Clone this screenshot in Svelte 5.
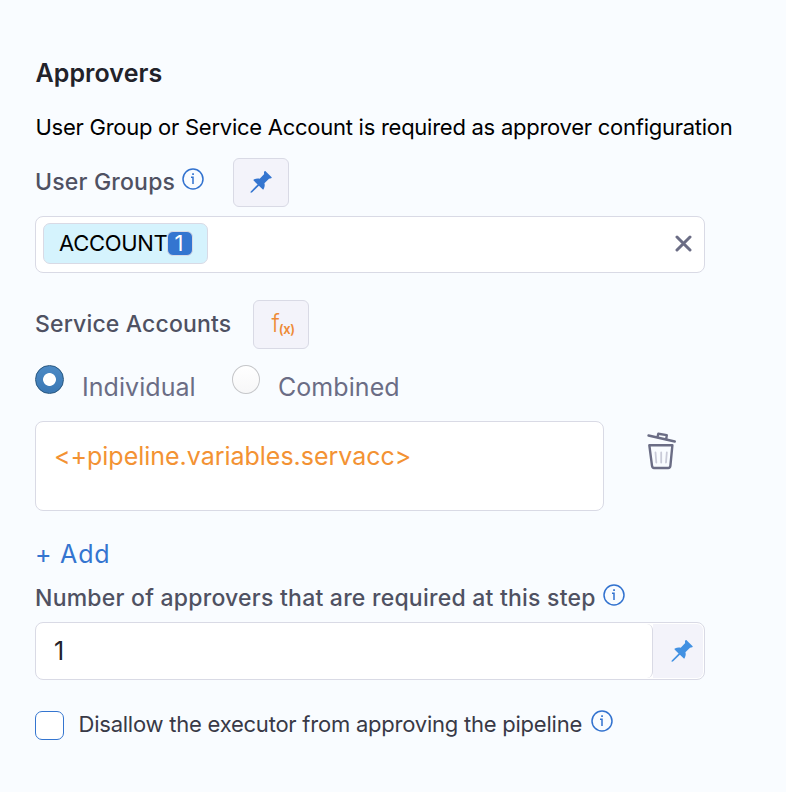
<script>
  let mode = $state('individual');
</script>

{#snippet info()}
  <svg class="info" width="22" height="22" viewBox="0 0 22 22" fill="none" stroke="#3272cf" aria-hidden="true">
    <circle cx="11" cy="11" r="10" stroke-width="1.5" />
    <path d="M9 9.2h2V15.9" stroke-width="1.5" />
    <path d="M10.2 6.2h1.7" stroke-width="1.8" />
  </svg>
{/snippet}

{#snippet pin(color)}
  <svg width="22" height="22" viewBox="0 0 22 22" fill={color} aria-hidden="true">
    <path d="M14.5 0.3C15.1-.1 15.4.1 15.8.5L21.4 6.1C21.9 6.6 21.8 7.1 21.1 7.2L19 7.8L14.4 12.3C15 14.2 14.8 16 13.6 18.2C13.4 18.7 13 18.7 12.6 18.3L8.9 14.7L2.2 21.2C1.5 21.9.2 21.9.6 20.8L1 20.2L7.6 13.4L3.8 9.7C3.3 9.2 3.3 8.8 3.9 8.5C5.7 7.5 7.9 7.1 9.7 7.7L14.2 3.1C13.9 2.2 13.8 1.1 14.5.3Z" />
  </svg>
{/snippet}

<main>
  <h2><span>Approvers</span></h2>
  <p class="intro"><span>User Group or Service Account is required as approver configuration</span></p>

  <div class="row groups">
    <span class="label l1">User Groups</span>
    {@render info()}
    <button class="square" aria-label="Fixed value">{@render pin('#3475d0')}</button>
  </div>

  <div class="field select">
    <span class="tag"><span class="name">ACCOUNT</span><span class="count">1</span></span>
    <svg width="18" height="18" viewBox="0 0 18 18" fill="none" stroke="#6b6d85" stroke-width="3" stroke-linecap="round" aria-label="Clear">
      <path d="M3 2L16 15M16 2L3 15" />
    </svg>
  </div>

  <div class="row service">
    <span class="label l2">Service Accounts</span>
    <button class="square fx" aria-label="Expression"><span class="f">f</span><span class="x">(x)</span></button>
  </div>

  <div class="radios">
    <button class="radio" class:on={mode === 'individual'} onclick={() => (mode = 'individual')} aria-label="Individual"></button>
    <span class="opt o1">Individual</span>
    <button class="radio" class:on={mode === 'combined'} onclick={() => (mode = 'combined')} aria-label="Combined"></button>
    <span class="opt o2">Combined</span>
  </div>

  <div class="expression">
    <div class="field area"><span>&lt;+pipeline.variables.servacc&gt;</span></div>
    <svg width="32" height="40" viewBox="0 0 32 40" fill="none" stroke="#6b6d85" stroke-width="2.4" stroke-linecap="round" stroke-linejoin="round" aria-label="Delete">
      <path d="M2.5 5.5L28.8 11.5" />
      <path d="M11.5 7L12.3 3.7L20.8 5.1L20.2 9" />
      <path d="M3.3 15.2H26.4L24.4 35.6Q24.2 38 22.2 38H8Q6.3 38 6 35.6Z" />
      <path d="M9.5 22.5L10.3 32.5M15.2 22.5V32.5M20.8 22.5L20 32.5" stroke="#c9cbd8" stroke-width="1.8" />
    </svg>
  </div>

  <div class="add"><span class="plus">+</span><span class="word">Add</span></div>

  <div class="row number">
    <span class="label l3">Number of approvers that are required at this step</span>
    {@render info()}
  </div>

  <div class="field amount">
    <div class="value">1</div>
    <div class="side">{@render pin('#4291e2')}</div>
  </div>

  <div class="row check">
    <span class="box"></span>
    <span class="dis">Disallow the executor from approving the pipeline</span>
    {@render info()}
  </div>
</main>

<style>
  :global(body) { background: #f9fcff; }
  main {
    box-sizing: border-box;
    width: 786px;
    height: 792px;
    padding: 56px 0 0 35px;
    background: #f9fcff;
    font-family: Inter, "Liberation Sans", sans-serif;
    color: #000;
    overflow: hidden;
    white-space: nowrap;
  }
  main * { box-sizing: border-box; }
  h2 { margin: 0; height: 34px; line-height: 34px; font-size: 25px; font-weight: 600; letter-spacing: 0.07px; color: #22222a; padding-left: 0.5px; }
  .intro { margin: 20px 0 0; height: 34px; line-height: 34px; font-size: 22px; letter-spacing: -0.26px; padding-left: 0.5px; }
  button { padding: 0; border: 0; font-family: inherit; }
  .row { display: flex; align-items: center; }
  .label { font-size: 23px; font-weight: 500; letter-spacing: 0.2px; color: #4f5162; }
  .groups { margin-top: 14px; height: 49px; }
  .l1, .l2, .l3, .o1, .o2 { flex: none; }
  .l1 { width: 147px; padding-bottom: 2px; }
  .info { flex: none; margin-bottom: 6px; }
  .groups .info { margin-bottom: 8px; }
  .square {
    display: flex;
    align-items: center;
    justify-content: center;
    width: 56px;
    height: 49px;
    border: 1px solid #d9dae5;
    border-radius: 6px;
    background: #f3f3fa;
  }
  .groups .square { margin-left: 29px; padding-bottom: 1px; }
  .field { border: 1px solid #d9dae5; border-radius: 8px; background: #fff; }
  .select {
    display: flex;
    align-items: center;
    justify-content: space-between;
    width: 670px;
    height: 57px;
    margin-top: 9px;
    padding: 0 12px 2px 7px;
  }
  .tag {
    display: flex;
    align-items: center;
    width: 165px;
    height: 41px;
    padding-left: 15px;
    border: 1px solid #d9dae5;
    border-radius: 7px;
    background: #d5f3fd;
    font-size: 22px;
  }
  .name { width: 108px; letter-spacing: -0.3px; padding-bottom: 2px; }
  .count {
    width: 26px;
    height: 25px;
    border: 1px solid #d9dae5;
    border-radius: 6px;
    background: #3475d0;
    color: #fff;
    line-height: 22px;
    padding-right: 2px;
    text-align: center;
  }
  .service { margin-top: 27px; height: 49px; }
  .l2 { width: 218px; letter-spacing: 0.15px; padding-bottom: 2px; }
  .fx { color: #ee8a35; padding-left: 4px; }
  .f { font-size: 24px; font-weight: 300; line-height: 28px; padding-bottom: 2px; }
  .x { font-size: 13px; font-weight: 600; letter-spacing: -0.4px; margin: 9px 0 0 -1px; }
  .radios { display: flex; height: 42px; margin-top: 14px; color: #6b6d85; font-size: 25px; letter-spacing: 0.06px; }
  .radio {
    flex: none;
    width: 28px;
    height: 29px;
    margin-top: 2px;
    border: 1px solid #c5c6c9;
    border-radius: 50%;
    background: linear-gradient(#fff, #f7f7f8);
  }
  .radio.on {
    width: 29px;
    border-color: #28577f;
    background: radial-gradient(circle, #fff 0 6px, transparent 6.8px), linear-gradient(#4c8ac5, #3b78b4);
  }
  .opt { line-height: 42px; padding-top: 3px; }
  .o1 { margin-left: 18px; width: 150px; }
  .o2 { margin-left: 18px; }
  .expression { display: flex; margin-top: 16px; }
  .area { width: 569px; height: 90px; padding: 17px 0 0 18px; color: #f39233; font-size: 25px; line-height: 34px; letter-spacing: -0.02px; }
  .expression svg { margin: 9px 0 0 42px; }
  .add { display: flex; height: 34px; margin-top: 26px; line-height: 34px; font-size: 25px; color: #3475d0; }
  .plus { width: 25px; }
  .word { letter-spacing: 0.9px; }
  .number { height: 34px; margin-top: 10px; }
  .l3 { width: 568px; letter-spacing: 0.235px; }
  .amount { display: flex; width: 670px; height: 58px; margin-top: 7px; padding: 1px; background: #fff; color: #22222a; font-size: 25px; }
  .value { width: 616px; padding-left: 17px; line-height: 54px; border-right: 1px solid #d9dae5; border-radius: 0 6px 6px 0; }
  .side { flex: 1; display: flex; align-items: center; justify-content: center; padding-left: 7px; background: #f3f3fa; border-radius: 0 6px 6px 0; }
  .check { height: 29px; margin-top: 31px; font-size: 22px; color: #383946; }
  .box { flex: none; width: 29px; height: 29px; border: 1px solid #3475d0; border-radius: 7px; background: #fff; }
  .dis { flex: none; width: 527px; padding-left: 14.5px; margin-top: -4px; letter-spacing: -0.23px; }
  .check .info { margin-top: -3px; }
</style>
